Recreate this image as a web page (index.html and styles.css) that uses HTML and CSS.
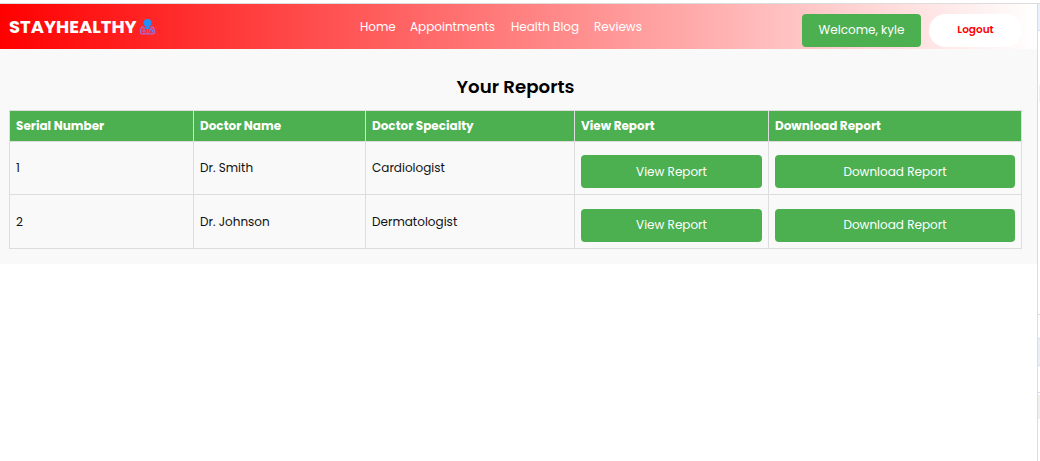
FILE: index.html
```
<!DOCTYPE html>
<html lang="en">
<head>
<meta charset="utf-8">
<title>StayHealthy - Your Reports</title>
<link rel="stylesheet" href="styles.css">
</head>
<body>
<div class="topline"></div>
<div class="shell">
  <div class="page">
    <header class="navbar">
      <a class="brand"><span class="brand-name">STAYHEALTHY</span>
        <svg class="doctor" viewBox="0 0 16 17" width="16" height="17">
          <circle cx="8.500" cy="4.800" r="3.900" fill="#2190ff"/>
          <path d="M4.500 8.700C2.200 9.200 1.600 11 1.600 13v1.400q0 1.500 1.500 1.500h10.700q1.500 0 1.500-1.500V13c0-2-.6-3.800-2.900-4.300" fill="none" stroke="#a96bd8" stroke-width="1.300"/>
          <path d="M6 8.500h5l-1.200 2.500H7.200z" fill="#2190ff"/>
          <path d="M5 9v2.500M12 9v2M10.700 14.500V13q0-1.700 1.400-1.700t1.400 1.700v1.500M8.500 10.500v5" fill="none" stroke="#7b78ee" stroke-width="1.200"/>
          <circle cx="5" cy="13" r="1.200" fill="none" stroke="#a96bd8"/>
        </svg>
      </a>
      <nav class="links"><a class="home">Home</a><a class="appointments">Appointments</a><a class="blog">Health Blog</a><a class="reviews">Reviews</a></nav>
      <div class="actions">
        <button class="btn welcome">Welcome, kyle</button>
        <button class="logout">Logout</button>
      </div>
    </header>
    <main class="reports">
      <h1>Your Reports</h1>
      <table>
        <colgroup><col class="c-serial"><col class="c-name"><col class="c-specialty"><col class="c-view"><col class="c-download"></colgroup>
        <thead><tr><th>Serial Number</th><th>Doctor Name</th><th>Doctor Specialty</th><th>View Report</th><th>Download Report</th></tr></thead>
        <tbody>
          <tr class="first"><td>1</td><td>Dr. Smith</td><td>Cardiologist</td><td><button class="btn">View Report</button></td><td><button class="btn">Download Report</button></td></tr>
          <tr class="second"><td>2</td><td>Dr. Johnson</td><td>Dermatologist</td><td><button class="btn">View Report</button></td><td><button class="btn">Download Report</button></td></tr>
        </tbody>
      </table>
    </main>
  </div>
  <aside class="edge"><i class="tab"></i><i class="chip"></i><i class="rule"></i><i class="selected"></i><i class="rule low"></i><i class="block"></i></aside>
</div>
</body>
</html>
```
FILE: styles.css
```
* { box-sizing: border-box; }
body { margin: 0; height: 461px; overflow: hidden; background: #fff; font-family: Poppins, Inter, sans-serif; font-size: 12px; color: #111; }
.topline { height: 4px; border-bottom: 1px solid #ddd; }
.shell { display: flex; height: 457px; }
.page { width: 1037px; }
.navbar { display: flex; height: 45px; background: linear-gradient(to right, #f00, #fff); }
.brand { display: flex; width: 360px; padding: 14px 0 0 9px; color: #fff; }
.brand-name { width: 130px; font-size: 18px; line-height: 18px; font-weight: 700; }
.doctor { display: block; }
.links { display: flex; gap: 15px; width: 442px; padding-top: 13px; color: #fff; font-size: 12px; line-height: 20px; white-space: nowrap; }
.home { width: 35px; }
.appointments { width: 86px; }
.blog { width: 68px; }
.actions { display: flex; gap: 8px; padding-top: 10px; }
button { display: block; height: 33px; margin: 0; padding: 0; border: 0; font-family: inherit; white-space: nowrap; }
.btn { width: 100%; border-radius: 4px; background: #4caf50; color: #fff; font-size: 12px; }
.actions .welcome { width: 119px; padding-bottom: 1px; }
.logout { width: 93px; padding-bottom: 2px; border-radius: 17px; background: #fff; color: #f00; font-size: 10.5px; font-weight: 600; }
.reports { height: 215px; padding: 25px 0 0 9px; background: #f9f9f9; }
h1 { width: 1013px; height: 36px; margin: 0; font-size: 18.2px; line-height: 25px; font-weight: 600; text-align: center; color: #000; }
table { width: 1013px; table-layout: fixed; border-collapse: collapse; }
.c-serial { width: 184px; }
.c-name { width: 172px; }
.c-specialty { width: 209px; }
.c-view { width: 194px; }
.c-download { width: 253px; }
th, td { padding: 0 6px; border: 1px solid #ddd; text-align: left; white-space: nowrap; }
th { height: 31px; background: #4caf50; color: #fff; font-size: 12px; font-weight: 700; }
td { padding-top: 13px; padding-bottom: 6px; line-height: 26px; vertical-align: top; }
.first { height: 53px; }
.second { height: 54px; }
.second td { padding-top: 14px; }
.second .btn { padding-bottom: 1px; }
.edge { display: flex; flex-direction: column; width: 3px; border-left: 1px solid #d0ddf5; }
.edge i { flex: none; display: block; }
.tab { height: 27px; background: #eaf1fd; border-bottom: 1px solid #cdddfb; }
.chip { height: 17px; margin: 54px 0 0 1px; background: #f2f2f2; }
.rule { height: 1px; margin-top: 212px; background: #cdddfb; }
.selected { height: 28px; margin-top: 23px; background: #eaeefa; border: solid #cdddfb; border-width: 1px 0; }
.rule.low { margin-top: 26px; }
.block { height: 24px; margin-top: 2px; background: #f0f0f0; }
```
